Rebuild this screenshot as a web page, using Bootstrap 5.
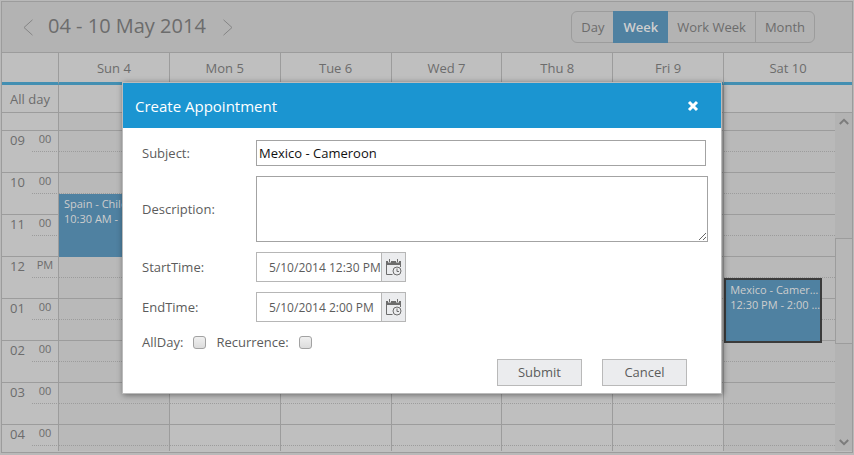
<!DOCTYPE html>
<html lang="en">
<head>
<meta charset="utf-8">
<meta name="viewport" content="width=device-width, initial-scale=1">
<title>Schedule</title>
<link href="https://cdn.jsdelivr.net/npm/bootstrap@5.3.0/dist/css/bootstrap.min.css" rel="stylesheet">
<style>
  :root { --line: #9c9c9c; --pane: #bfbfbf; --shade: #b9b9b9; --bar: #b3b3b3; --ink: #6c6c6c; --event: #4f81a1; }
  body { font: 13px/18px "Open Sans", "Noto Sans", sans-serif; color: var(--ink); background: var(--shade); min-height: 100vh; overflow: hidden; }
  .scheduler { margin: 1px 1px 2px; height: calc(100vh - 3px); border: 1px solid var(--line); background: var(--pane); }
  .toolbar { height: 51px; padding: 0 37px 0 20px; background: var(--bar); border-bottom: 1px solid var(--line); }
  .toolbar h1 { font-size: 20px; line-height: 28px; font-weight: 400; color: var(--ink); margin: 0 16px 2px 14px; }
  .step { border: 0; background: none; padding: 0; line-height: 0; color: #858585; }
  .views .btn { --bs-btn-color: var(--ink); --bs-btn-border-color: var(--line); --bs-btn-padding-x: 9px; --bs-btn-padding-y: 6px; --bs-btn-font-size: 13px; --bs-btn-line-height: 18px; --bs-btn-border-radius: 6px; --bs-btn-active-bg: var(--event); --bs-btn-active-border-color: var(--event); --bs-btn-active-color: #cfcfcf; }
  .views .btn.active { font-weight: 600; }
  .days, .slots { width: 100%; table-layout: fixed; border-collapse: separate; border-spacing: 0; }
  .days th, .days td { border-right: 1px solid var(--line); padding: 0; font-weight: 400; text-align: center; }
  .days tr > :last-child { border-right: 0; }
  .days thead th { height: 32px; border-bottom: 3px solid #438fb2; }
  .days tbody > tr > * { height: 28px; border-bottom: 1px solid var(--line); }
  .gutter { width: 57px; }
  .hour { width: 30px; }
  .minute { width: 27px; }
  .rail { width: 17px; }
  .viewport { overflow: hidden; min-height: 0; margin-bottom: 1px; }
  .slots th, .slots td { padding: 0; height: 21px; font-weight: 400; vertical-align: top; border-bottom: 1px solid var(--line); }
  .slots .half > td { border-bottom: 1px dotted var(--line); }
  .slots th { text-align: left; padding: 0 0 0 8px; }
  .slots .mm { text-align: center; font-size: 11px; line-height: 16px; border-right: 1px solid var(--line); }
  .slots .day { position: relative; border-right: 1px solid var(--line); }
  .slots .day:last-child { border-right: 0; }
  .slots .off { background: var(--shade); }
  .slots .peek > * { height: 18px; }
  .event { position: absolute; z-index: 1; top: 0; left: 0; height: 63px; background: var(--event); color: #cdcdcd; font-size: 11px; line-height: 15px; padding: 2px 5px; }
  .event.spain { width: 99px; }
  .event.mexico { width: 98px; height: 65px; padding: 2px 0 2px 4px; border: 2px solid #3b3b3b; }
  .scrollrail { background: var(--bar); color: #7c7c7c; }
  .scrollrail button { border: 0; padding: 0; height: 17px; background: none; color: inherit; line-height: 0; }
  .before { flex: 109 0 0; }
  .thumb { flex: 104 0 0; background: #b7b7b7; border: 1px solid var(--line); border-right: 0; }
  .after { flex: 91 0 0; }
  .veil { padding: 82px 10px 0 0; }
  .dialog-box { width: 600px; background: #fff; border: 1px solid #bbb; box-shadow: 1px 1px 6px rgba(0, 0, 0, .45); z-index: 3; color: #5c5c5c; }
  .dialog-head { height: 45px; background: #1b95d1; color: #fff; padding: 0 20px 0 12px; }
  .dialog-head h2 { font-size: 15px; line-height: 20px; font-weight: 400; }
  .dialog-head button { border: 0; padding: 0; background: none; color: #fff; line-height: 0; }
  .dialog-form { padding: 12px 13px 7px 19px; gap: 10px; }
  .field-name { width: 114px; flex: none; }
  .entry { border: 1px solid #a3a3a3; padding: 0 2px; color: #111; background: #fff; outline: 0; }
  .subject { height: 26px; margin-right: 2px; }
  .notes { height: 66px; }
  .stamp { width: 150px; height: 30px; border: 1px solid #b6b6b6; }
  .stamp input { border: 0; padding: 2px 0 0 12px; min-width: 0; color: #5c5c5c; font-size: 12px; outline: 0; }
  .stamp button { width: 24px; flex: none; border: 0; border-left: 1px solid #b6b6b6; padding: 0; background: #ebecee; color: #6c6c6c; line-height: 0; }
  .checks { height: 20px; gap: 10px; }
  .tick { appearance: none; width: 13px; height: 13px; border: 1px solid #a2a2a2; border-radius: 3px; background: linear-gradient(#f0f0f0, #dcdcdc); margin: 0; }
  .actions { gap: 20px; padding-right: 21px; margin-top: -3px; }
  .actions .btn { --bs-btn-padding-x: 0; --bs-btn-padding-y: 3px; --bs-btn-font-size: 13px; --bs-btn-line-height: 19px; --bs-btn-border-radius: 0; --bs-btn-bg: #ebecee; --bs-btn-border-color: #b9b9b9; --bs-btn-color: #5c5c5c; width: 85px; }
</style>
</head>
<body class="position-relative">
<main class="scheduler d-flex flex-column">
  <header class="toolbar d-flex align-items-center justify-content-between flex-shrink-0">
    <div class="d-flex align-items-center">
      <button class="step" type="button" aria-label="Previous week"><svg width="12" height="17" viewBox="0 0 12 17" fill="none" stroke="currentColor"><path d="M10.5 .8 2 8.500l8.500 7.700"/></svg></button>
      <h1 class="text-nowrap">04 - 10 May 2014</h1>
      <button class="step" type="button" aria-label="Next week"><svg width="12" height="17" viewBox="0 0 12 17" fill="none" stroke="currentColor"><path d="M1.500 .8 10 8.500l-8.500 7.700"/></svg></button>
    </div>
    <div class="btn-group views" role="group" aria-label="View">
      <button class="btn" type="button">Day</button>
      <button class="btn active" type="button">Week</button>
      <button class="btn" type="button">Work Week</button>
      <button class="btn" type="button">Month</button>
    </div>
  </header>
  <table class="days flex-shrink-0">
    <colgroup><col class="gutter"><col span="7"><col class="rail"></colgroup>
    <thead><tr><th></th><th>Sun 4</th><th>Mon 5</th><th>Tue 6</th><th>Wed 7</th><th>Thu 8</th><th>Fri 9</th><th colspan="2">Sat 10</th></tr></thead>
    <tbody><tr><th>All day</th><td></td><td></td><td></td><td></td><td></td><td></td><td colspan="2"></td></tr></tbody>
  </table>
  <div class="viewport d-flex flex-fill">
    <div class="flex-fill">
      <table class="slots">
        <colgroup><col class="hour"><col class="minute"><col span="7"></colgroup>
        <tbody id="slots"></tbody>
      </table>
    </div>
    <div class="scrollrail rail d-flex flex-column flex-shrink-0">
      <button type="button" aria-label="Scroll up"><svg width="10" height="7" viewBox="0 0 10 7" fill="none" stroke="currentColor" stroke-width="2"><path d="M.8 6 5 1.800 9.200 6"/></svg></button>
      <div class="before"></div><div class="thumb"></div><div class="after"></div>
      <button type="button" aria-label="Scroll down"><svg width="10" height="7" viewBox="0 0 10 7" fill="none" stroke="currentColor" stroke-width="2"><path d="M.8 1 5 5.200 9.200 1"/></svg></button>
    </div>
  </div>
</main>

<div class="veil position-absolute top-0 start-0 w-100 d-flex justify-content-center">
  <section class="dialog-box" role="dialog" aria-labelledby="dialogTitle">
    <div class="dialog-head d-flex align-items-center justify-content-between">
      <h2 class="mb-0" id="dialogTitle">Create Appointment</h2>
      <button type="button" aria-label="Close"><svg width="16" height="12" viewBox="0 0 16 12" fill="none" stroke="currentColor" stroke-width="3"><path d="m4 2 8 8m0-8-8 8"/></svg></button>
    </div>
    <form class="dialog-form d-flex flex-column">
      <div class="d-flex align-items-center"><label class="field-name" for="subject">Subject:</label><input class="entry subject flex-fill" id="subject" type="text" value="Mexico - Cameroon"></div>
      <div class="d-flex align-items-center"><label class="field-name" for="notes">Description:</label><textarea class="entry notes flex-fill" id="notes"></textarea></div>
      <div class="d-flex align-items-center"><label class="field-name" for="start">StartTime:</label>
        <div class="stamp d-flex"><input class="flex-fill" id="start" type="text" value="5/10/2014 12:30 PM"><button type="button" aria-label="Pick start time"><svg width="17" height="17" viewBox="0 0 17 17" fill="none" stroke="currentColor"><path d="M1.500 4v11.500h6M15.500 4v4" /><path fill="currentColor" stroke="none" d="M1 2h2v1.500h3V2h5v1.500h3V2h2v4H1zM4 0h1v3H4zM12 0h1v3h-1z"/><circle cx="12" cy="12" r="4"/><path d="M12 9.500v3h2"/></svg></button></div></div>
      <div class="d-flex align-items-center"><label class="field-name" for="end">EndTime:</label>
        <div class="stamp d-flex"><input class="flex-fill" id="end" type="text" value="5/10/2014 2:00 PM"><button type="button" aria-label="Pick end time"><svg width="17" height="17" viewBox="0 0 17 17" fill="none" stroke="currentColor"><path d="M1.500 4v11.500h6M15.500 4v4" /><path fill="currentColor" stroke="none" d="M1 2h2v1.500h3V2h5v1.500h3V2h2v4H1zM4 0h1v3H4zM12 0h1v3h-1z"/><circle cx="12" cy="12" r="4"/><path d="M12 9.500v3h2"/></svg></button></div></div>
      <div class="checks d-flex align-items-center"><label for="allday">AllDay:</label><input class="tick" id="allday" type="checkbox"><label for="repeat">Recurrence:</label><input class="tick" id="repeat" type="checkbox"></div>
      <div class="actions d-flex justify-content-end"><button class="btn" type="submit">Submit</button><button class="btn" type="button">Cancel</button></div>
    </form>
  </section>
</div>
<script>
  const hours = [["09", "00"], ["10", "00"], ["11", "00"], ["12", "PM"], ["01", "00"], ["02", "00"], ["03", "00"], ["04", "00"]];
  const events = {
    "10-0": '<div class="event spain"><div class="text-truncate">Spain - Chile</div><div class="text-truncate">10:30 AM - 12:00 PM</div></div>',
    "12-6": '<div class="event mexico"><div class="text-truncate">Mexico - Cameroon</div><div class="text-truncate">12:30 PM - 2:00 PM</div></div>'
  };
  const cells = hour => [0, 1, 2, 3, 4, 5, 6].map(d =>
    `<td class="day${d === 0 || d === 6 ? " off" : ""}">${events[hour + "-" + d] || ""}</td>`).join("");
  document.getElementById("slots").innerHTML =
    `<tr class="peek"><th></th><td class="mm"></td>${cells("")}</tr>` +
    hours.map(([h, m]) =>
      `<tr class="half"><th rowspan="2" scope="row">${h}</th><td class="mm">${m}</td>${cells("")}</tr>` +
      `<tr><td class="mm"></td>${cells(h)}</tr>`).join("");
</script>
<script src="https://cdn.jsdelivr.net/npm/bootstrap@5.3.0/dist/js/bootstrap.bundle.min.js"></script>
</body>
</html>
